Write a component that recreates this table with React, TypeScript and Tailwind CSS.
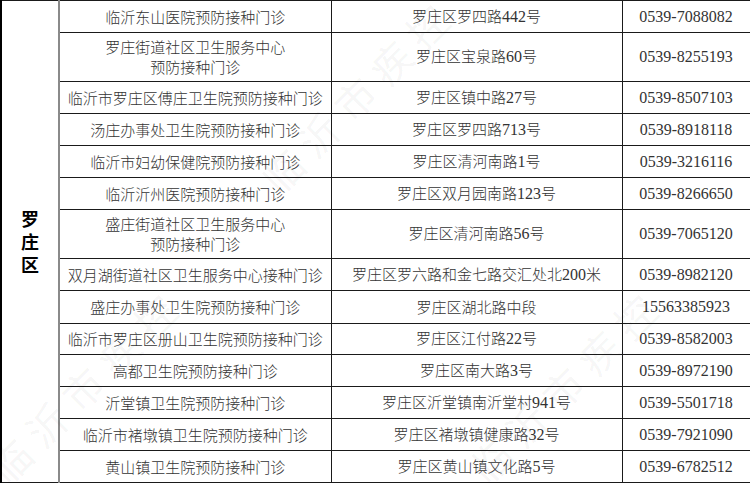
import React from "react";

type Row = { name: string[]; addr: string; phone: string; h: string };

const rows: Row[] = [
  { name: ["临沂东山医院预防接种门诊"], addr: "罗庄区罗四路442号", phone: "0539-7088082", h: "h-[32px]" },
  { name: ["罗庄街道社区卫生服务中心", "预防接种门诊"], addr: "罗庄区宝泉路60号", phone: "0539-8255193", h: "h-[49px]" },
  { name: ["临沂市罗庄区傅庄卫生院预防接种门诊"], addr: "罗庄区镇中路27号", phone: "0539-8507103", h: "h-[32px]" },
  { name: ["汤庄办事处卫生院预防接种门诊"], addr: "罗庄区罗四路713号", phone: "0539-8918118", h: "h-[32px]" },
  { name: ["临沂市妇幼保健院预防接种门诊"], addr: "罗庄区清河南路1号", phone: "0539-3216116", h: "h-[32px]" },
  { name: ["临沂沂州医院预防接种门诊"], addr: "罗庄区双月园南路123号", phone: "0539-8266650", h: "h-[32px]" },
  { name: ["盛庄街道社区卫生服务中心", "预防接种门诊"], addr: "罗庄区清河南路56号", phone: "0539-7065120", h: "h-[49px]" },
  { name: ["双月湖街道社区卫生服务中心接种门诊"], addr: "罗庄区罗六路和金七路交汇处北200米", phone: "0539-8982120", h: "h-[32px]" },
  { name: ["盛庄办事处卫生院预防接种门诊"], addr: "罗庄区湖北路中段", phone: "15563385923", h: "h-[33px]" },
  { name: ["临沂市罗庄区册山卫生院预防接种门诊"], addr: "罗庄区江付路22号", phone: "0539-8582003", h: "h-[31px]" },
  { name: ["高都卫生院预防接种门诊"], addr: "罗庄区南大路3号", phone: "0539-8972190", h: "h-[32px]" },
  { name: ["沂堂镇卫生院预防接种门诊"], addr: "罗庄区沂堂镇南沂堂村941号", phone: "0539-5501718", h: "h-[32px]" },
  { name: ["临沂市褚墩镇卫生院预防接种门诊"], addr: "罗庄区褚墩镇健康路32号", phone: "0539-7921090", h: "h-[32px]" },
  { name: ["黄山镇卫生院预防接种门诊"], addr: "罗庄区黄山镇文化路5号", phone: "0539-6782512", h: "h-[32px]" },
];

function Mixed({ text }: { text: string }) {
  const parts = text.split(/([0-9\-]+)/).filter((p) => p.length > 0);
  return (
    <>
      {parts.map((p, i) =>
        /^[0-9\-]+$/.test(p) ? (
          <span key={i} className="text-[16px] font-['Liberation_Serif',serif]">
            {p}
          </span>
        ) : (
          <span key={i}>{p}</span>
        )
      )}
    </>
  );
}

const WM = "临沂市疾控";

function Watermark({ x, y }: { x: number; y: number }) {
  return (
    <>
      {WM.split("").map((c, i) => (
        <span
          key={i}
          className="absolute -rotate-45 text-[40px] leading-none font-normal text-black/[0.05]"
          style={{ left: x + i * 36, top: y - i * 36 }}
        >
          {c}
        </span>
      ))}
    </>
  );
}

export default function App() {
  const cell = "border border-[#1a1a1a] text-center align-middle p-0";
  return (
    <div className="relative w-[750px] h-[483px] bg-white overflow-hidden font-['Noto_Sans_CJK_SC',sans-serif] text-[15px] text-[#333] font-light">
      <table className="table-fixed border-collapse w-[749px] border-t border-[#1a1a1a]">
        <colgroup>
          <col className="w-[58px]" />
          <col className="w-[272px]" />
          <col className="w-[291px]" />
          <col className="w-[128px]" />
        </colgroup>
        <tbody>
          {rows.map((r, i) => (
            <tr key={i} className={r.h}>
              {i === 0 && (
                <td
                  rowSpan={rows.length}
                  className="border-l-2 border-l-black border-r-2 border-r-[#8a8a8a] border-y border-y-[#1a1a1a] text-center align-middle p-0"
                >
                  <div className="flex flex-col items-center text-[18px] leading-[23px] font-bold text-black">
                    <span>罗</span>
                    <span>庄</span>
                    <span>区</span>
                  </div>
                </td>
              )}
              <td className={`${cell} leading-[20px]`}>
                {r.name.map((n, k) => (
                  <div key={k}>{n}</div>
                ))}
              </td>
              <td className={cell}>
                <Mixed text={r.addr} />
              </td>
              <td className={`${cell} font-['Liberation_Serif',serif] text-[16px]`}>{r.phone}</td>
            </tr>
          ))}
        </tbody>
      </table>

      <div className="pointer-events-none absolute inset-0">
        <Watermark x={262} y={150} />
        <Watermark x={470} y={440} />
        <Watermark x={-10} y={440} />
      </div>
    </div>
  );
}
